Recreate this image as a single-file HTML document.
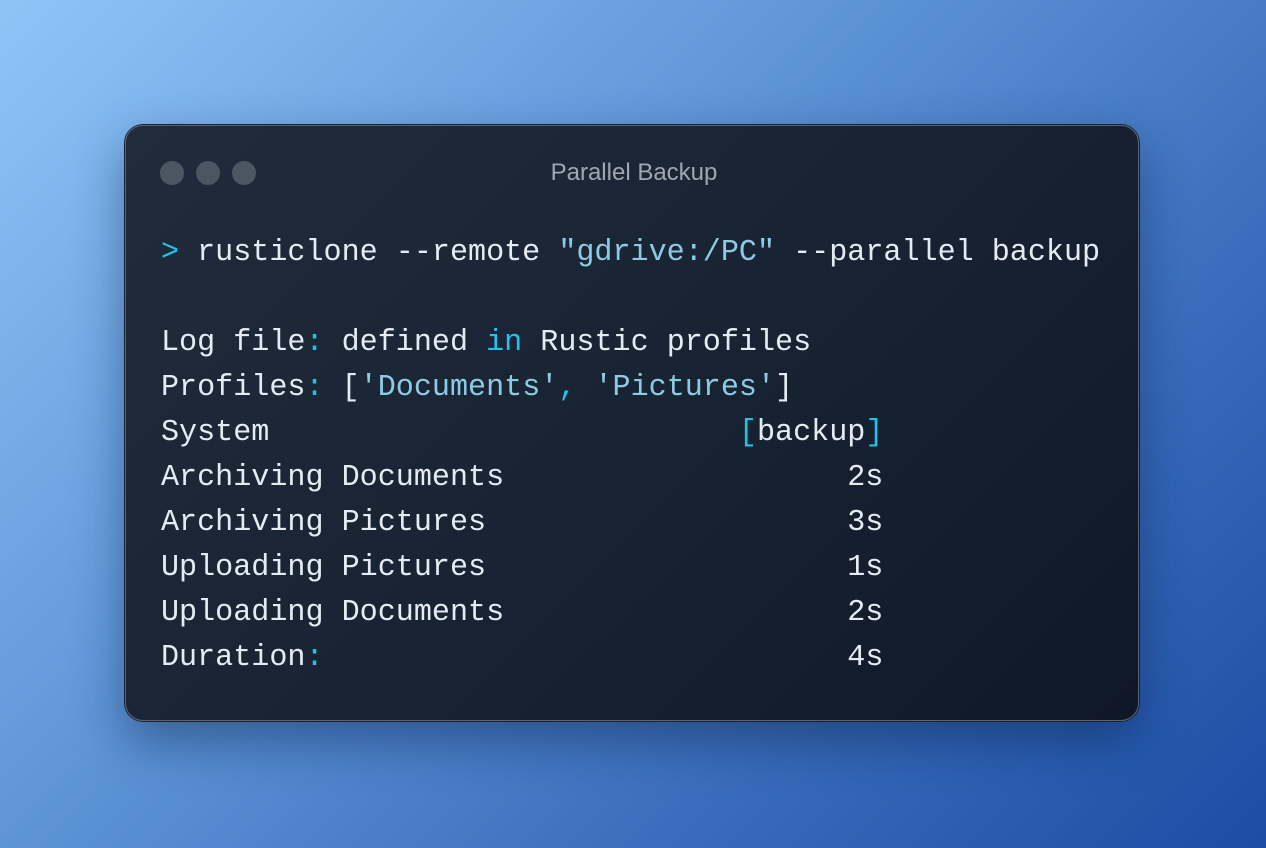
<!DOCTYPE html>
<html><head><style>
html,body{margin:0;padding:0;width:1266px;height:848px;overflow:hidden;}
body{background:linear-gradient(135deg,#8ec5f7 0%,#5d95d8 40%,#3568b8 75%,#1a4ea5 100%);position:relative;font-family:"Liberation Mono",monospace;}
.win{position:absolute;left:125px;top:125px;width:1012px;height:594px;border-radius:18px;background:linear-gradient(135deg,#202c3b 0%,#172232 55%,#0f1828 100%);border:1.5px solid #5a6470;box-shadow:0 0 0 1px #1a2230,0 20px 50px rgba(10,30,70,.45);}
.dot{position:absolute;top:35px;width:24px;height:24px;border-radius:50%;background:#4b5663;}
.title{position:absolute;top:33px;left:0;right:0;text-align:center;color:#a0a7b0;font-family:"Liberation Sans",sans-serif;font-size:24px;padding-left:4px;}
.l{position:absolute;left:35px;font-size:30.1px;color:#e4ebf2;white-space:pre;line-height:40px;}
.c{color:#25c2e8}.s{color:#8dcbe2}
</style></head><body>
<div class="win">
<div class="dot" style="left:34px"></div><div class="dot" style="left:70px"></div><div class="dot" style="left:106px"></div>
<div class="title">Parallel Backup</div>
<div class="l" style="top:107px"><span class="c">&gt;</span> rusticlone --remote <span class="s">"gdrive:/PC"</span> --parallel backup</div>
<div class="l" style="top:197px">Log file<span class="c">:</span> defined <span class="c">in</span> Rustic profiles</div>
<div class="l" style="top:242px">Profiles<span class="c">:</span> [<span class="s">'Documents'</span><span class="c">,</span> <span class="s">'Pictures'</span>]</div>
<div class="l" style="top:287px">System                          <span class="c">[</span>backup<span class="c">]</span></div>
<div class="l" style="top:332px">Archiving Documents                   2s</div>
<div class="l" style="top:377px">Archiving Pictures                    3s</div>
<div class="l" style="top:422px">Uploading Pictures                    1s</div>
<div class="l" style="top:467px">Uploading Documents                   2s</div>
<div class="l" style="top:512px">Duration<span class="c">:</span>                             4s</div>
</div>
</body></html>
